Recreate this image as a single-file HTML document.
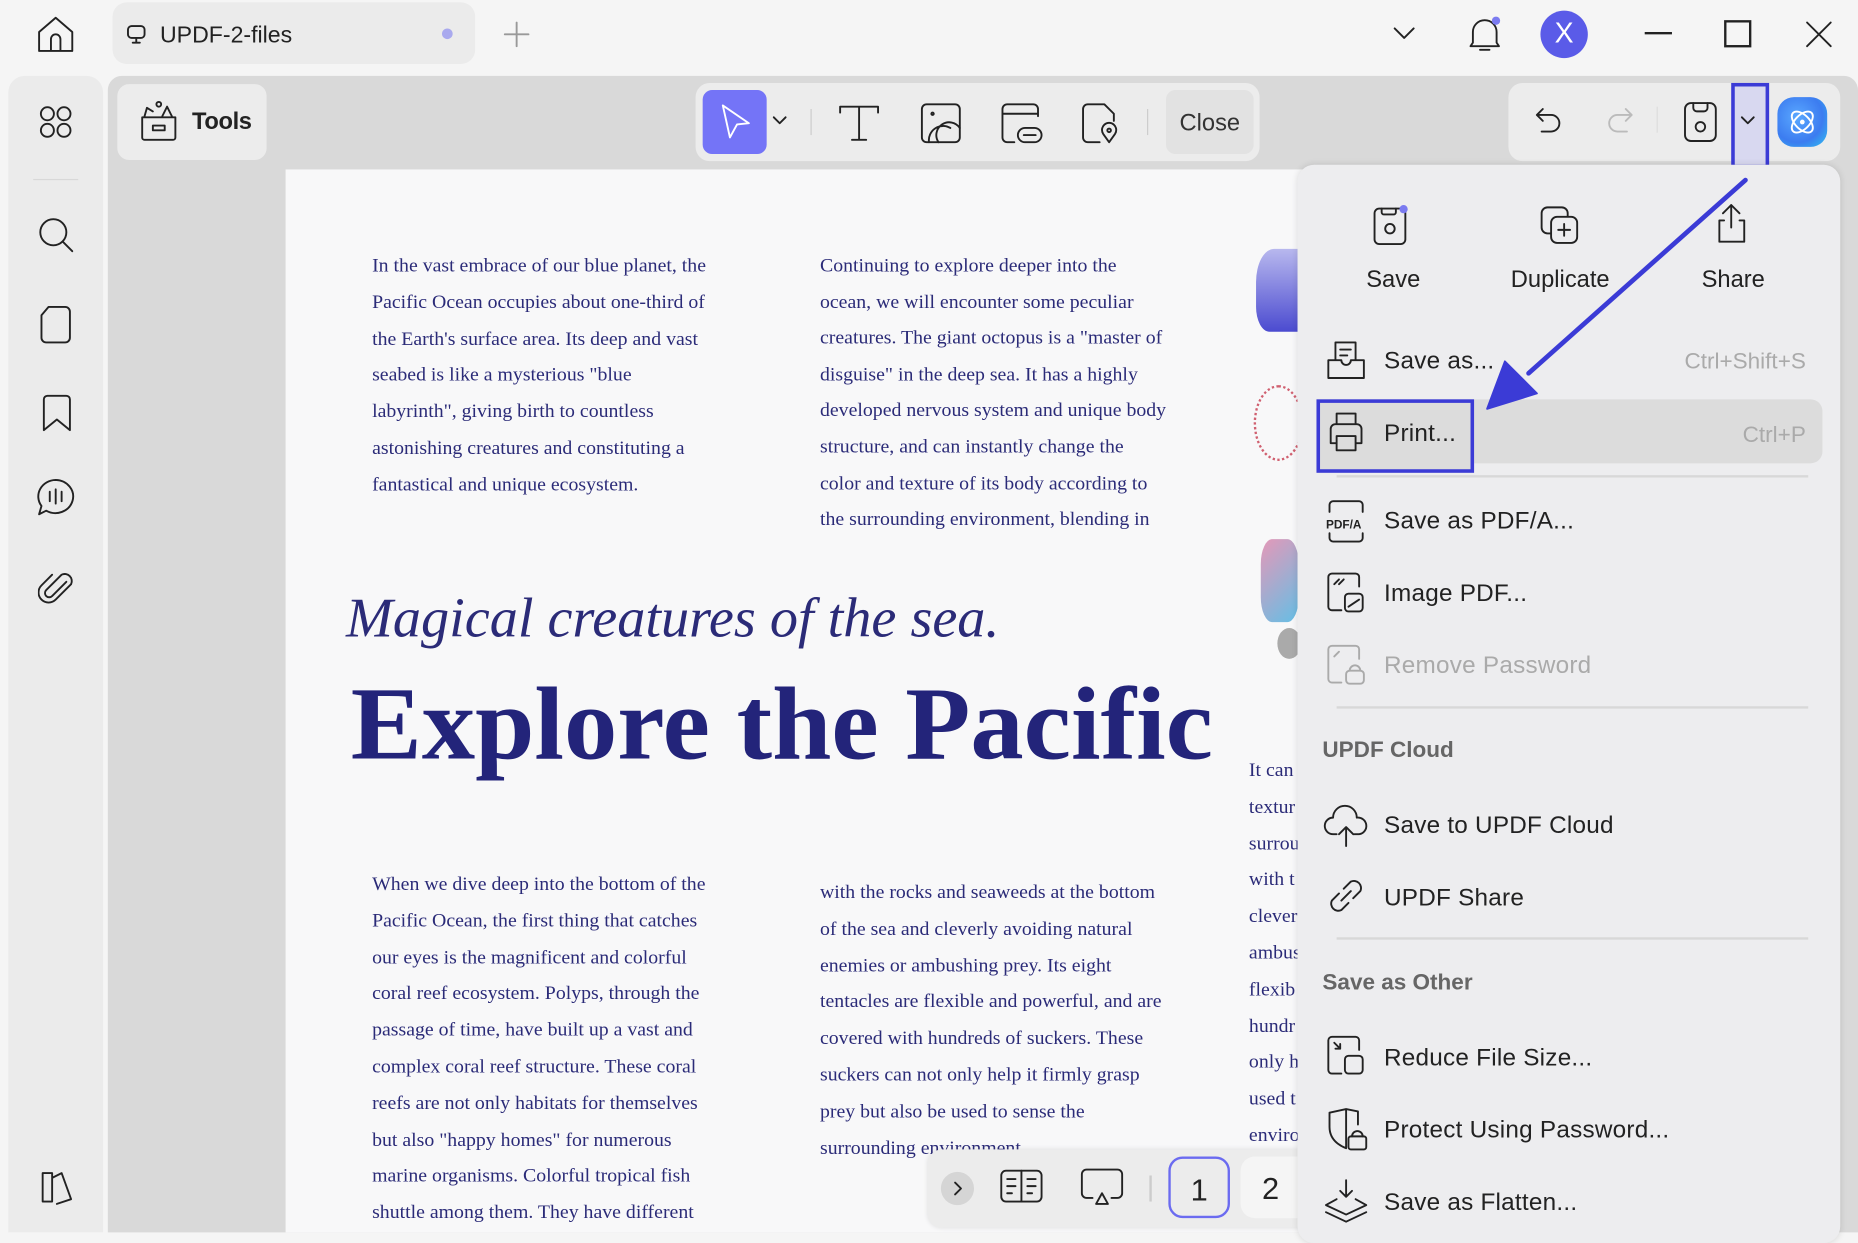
<!DOCTYPE html>
<html><head><meta charset="utf-8">
<style>
html,body{margin:0;padding:0;width:1858px;height:1232px;overflow:hidden;background:#f5f5f5}
#w{position:absolute;left:0;top:0;width:1568px;height:1040px;transform:scale(1.18495);transform-origin:0 0;font-family:"Liberation Sans",sans-serif;background:#f5f5f5}
.a{position:absolute}
svg{position:absolute;fill:none;stroke:#222;stroke-width:1.6;stroke-linecap:round;stroke-linejoin:round}
.pt{position:absolute;font-family:"Liberation Serif",serif;color:#2b2b78;font-size:16px;line-height:30.8px;white-space:nowrap;transform:scaleX(1.045);transform-origin:0 0}
.mi{position:absolute;left:1168px;font-size:20.5px;color:#222;letter-spacing:0.2px}
.sc{position:absolute;right:44px;font-size:19px;color:#aaa}
.hd{position:absolute;left:1116px;font-size:19px;font-weight:bold;color:#666}
.sep{position:absolute;left:1128px;width:398px;height:2px;background:#d8d8d8}
</style></head><body><div id="w">
<!-- top bar -->
<svg style="left:30px;top:12px" width="34" height="34" viewBox="0 0 34 34"><path d="M3 15 L17 3 L31 15 V31 H3 Z M13 31 V21 a4 4 0 0 1 8 0 V31"/></svg>
<div class="a" style="left:95px;top:2px;width:306px;height:52px;border-radius:12px;background:#ebebeb"></div>
<svg style="left:106px;top:20px" width="18" height="18" viewBox="0 0 18 18"><rect x="2" y="2" width="14" height="10" rx="3"/><path d="M9 12 V16 M6 16 H12"/></svg>
<div class="a" style="left:135px;top:19px;font-size:19.5px;color:#222">UPDF-2-files</div>
<div class="a" style="left:373px;top:24px;width:9px;height:9px;border-radius:50%;background:#a9a9ee"></div>
<svg style="left:424px;top:17px" width="24" height="24" viewBox="0 0 24 24"><path d="M12 2V22M2 12H22" stroke="#999"/></svg>
<svg style="left:1174px;top:20px" width="22" height="16" viewBox="0 0 22 16"><path d="M3 4 L11 12 L19 4"/></svg>
<svg style="left:1238px;top:12px" width="30" height="34" viewBox="0 0 30 34"><path d="M5 24 V15 a10 10 0 0 1 20 0 V24 L27 27 H3 Z M11 30 H19"/></svg>
<div class="a" style="left:1259px;top:14px;width:7px;height:7px;border-radius:50%;background:#7b7bf0"></div>
<div class="a" style="left:1300px;top:9px;width:40px;height:40px;border-radius:50%;background:#5a5be8;color:#fff;font-size:24px;text-align:center;line-height:40px">X</div>
<div class="a" style="left:1388px;top:27px;width:23px;height:2px;background:#222"></div>
<div class="a" style="left:1455px;top:17px;width:19px;height:19px;border:2px solid #222"></div>
<svg style="left:1522px;top:16px" width="26" height="26" viewBox="0 0 26 26"><path d="M3 3 L23 23 M23 3 L3 23"/></svg>
<!-- left sidebar -->
<div class="a" style="left:7px;top:64px;width:80px;height:976px;background:#ebebeb;border-radius:14px 14px 0 0"></div>
<svg style="left:32px;top:88px" width="30" height="30" viewBox="0 0 30 30"><circle cx="8" cy="8" r="5.5"/><circle cx="22" cy="8" r="5.5"/><circle cx="8" cy="22" r="5.5"/><circle cx="22" cy="22" r="5.5"/></svg>
<div class="a" style="left:28px;top:151px;width:38px;height:1px;background:#d8d8d8"></div>
<svg style="left:30px;top:181px" width="34" height="34" viewBox="0 0 34 34"><circle cx="15" cy="15" r="11"/><path d="M23 23 L31 31"/></svg>
<svg style="left:32px;top:257px" width="30" height="34" viewBox="0 0 30 34"><path d="M9 2 H23 a4 4 0 0 1 4 4 V28 a4 4 0 0 1 -4 4 H7 a4 4 0 0 1 -4 -4 V9 Z"/></svg>
<svg style="left:34px;top:332px" width="28" height="34" viewBox="0 0 28 34"><path d="M3 5 a3 3 0 0 1 3 -3 H22 a3 3 0 0 1 3 3 V31 L14 22 L3 31 Z"/></svg>
<svg style="left:29px;top:402px" width="36" height="36" viewBox="0 0 36 36"><path d="M18 3 a15 14 0 1 1 -8 26 L4 32 L6 25 a15 14 0 0 1 12 -22 Z M13 13 V21 M18 11 V23 M23 13 V21"/></svg>
<svg style="left:32px;top:479px" width="32" height="34" viewBox="0 0 32 34"><path d="M24 12 L12 24 a3 3 0 0 1 -5 -5 L20 6 a6 6 0 0 1 8 8 L15 27 a8 8 0 0 1 -12 -12 L12 6"/></svg>
<svg style="left:32px;top:986px" width="32" height="32" viewBox="0 0 32 32"><path d="M4 4 H12 V28 H4 Z M12 8 L20 4 L28 26 L16 30"/></svg>
<!-- main -->
<div class="a" style="left:91px;top:64px;width:1477px;height:976px;background:#d9d9d9;border-radius:12px 12px 0 0"></div>
<div class="a" style="left:99px;top:71px;width:126px;height:64px;background:#ececec;border-radius:10px"></div>
<svg style="left:117px;top:84px" width="34" height="36" viewBox="0 0 34 36"><path d="M3 15 H31 V32 a2 2 0 0 1 -2 2 H5 a2 2 0 0 1 -2 -2 Z M12 22 H22 V26 H12 Z M5 14 L7 7 L12 10 M20 14 L24 6 L28 14"/><circle cx="17" cy="4" r="2"/></svg>
<div class="a" style="left:162px;top:92px;font-size:20px;font-weight:bold;color:#222;letter-spacing:-0.3px">Tools</div>
<div class="a" style="left:587px;top:70px;width:476px;height:66px;background:#ececec;border-radius:12px"></div>
<div class="a" style="left:593px;top:76px;width:54px;height:54px;background:#7474f7;border-radius:8px"></div>
<svg style="left:605px;top:86px" width="32" height="34" viewBox="0 0 32 34"><path d="M5 3 L27 18 L17 19 L11 30 Z" stroke="#fff"/></svg>
<svg style="left:651px;top:97px" width="14" height="10" viewBox="0 0 14 10"><path d="M2 2 L7 7 L12 2"/></svg>
<div class="a" style="left:684px;top:92px;width:1px;height:22px;background:#ccc"></div>
<svg style="left:706px;top:86px" width="38" height="34" viewBox="0 0 38 34"><path d="M3 9 V4 H35 V9 M19 4 V32 M13 32 H25"/></svg>
<svg style="left:776px;top:86px" width="36" height="36" viewBox="0 0 36 36"><rect x="2" y="2" width="32" height="32" rx="4"/><circle cx="11" cy="10" r="1"/><path d="M8 34 a12 12 0 0 1 18 -12 M16 34 a10 10 0 0 1 18 -12"/></svg>
<svg style="left:844px;top:86px" width="38" height="36" viewBox="0 0 38 36"><path d="M12 34 H6 a4 4 0 0 1 -4 -4 V6 a4 4 0 0 1 4 -4 H28 a4 4 0 0 1 4 4 V12 M2 10 H32"/><rect x="15" y="22" width="20" height="12" rx="6"/><path d="M20 28 H30"/></svg>
<svg style="left:912px;top:86px" width="34" height="36" viewBox="0 0 34 36"><path d="M16 34 H6 a4 4 0 0 1 -4 -4 V6 a4 4 0 0 1 4 -4 H20 L28 10 V16 M24 34 L19 27 a6 6 0 1 1 10 0 Z"/><circle cx="24" cy="24" r="1.5"/></svg>
<div class="a" style="left:968px;top:92px;width:1px;height:22px;background:#ccc"></div>
<div class="a" style="left:984px;top:76px;width:74px;height:54px;background:#e2e2e2;border-radius:8px;font-size:20px;color:#333;text-align:center;line-height:56px">Close</div>
<div class="a" style="left:1273px;top:70px;width:280px;height:66px;background:#ececec;border-radius:12px"></div>
<svg style="left:1294px;top:88px" width="26" height="28" viewBox="0 0 26 28"><path d="M8 4 L3 9 L8 14 M3 9 H15 a7 7 0 0 1 0 14 H7"/></svg>
<svg style="left:1354px;top:88px" width="26" height="28" viewBox="0 0 26 28"><path d="M18 4 L23 9 L18 14 M23 9 H11 a7 7 0 0 0 0 14 H19" stroke="#bbb"/></svg>
<div class="a" style="left:1398px;top:90px;width:1px;height:22px;background:#ddd"></div>
<svg style="left:1420px;top:85px" width="32" height="36" viewBox="0 0 32 36"><rect x="2" y="2" width="26" height="32" rx="5"/><path d="M9 2 V6 a3 3 0 0 0 3 3 H18 a3 3 0 0 0 3 -3 V2"/><circle cx="15" cy="22" r="4"/></svg>
<div class="a" style="left:1461px;top:70px;width:26px;height:66px;background:#d8d8f0;border:3px solid #3b3bd6"></div>
<svg style="left:1467px;top:97px" width="16" height="10" viewBox="0 0 16 10"><path d="M3 2 L8 7 L13 2"/></svg>
<div class="a" style="left:1500px;top:82px;width:42px;height:42px;border-radius:14px;background:radial-gradient(circle at 40% 40%,#5aa8ff,#3c7cf0 60%,#2fc0f0)"></div>
<svg style="left:1506px;top:88px" width="30" height="30" viewBox="0 0 30 30"><ellipse cx="15" cy="15" rx="11" ry="6" stroke="#fff" transform="rotate(45 15 15)"/><ellipse cx="15" cy="15" rx="11" ry="6" stroke="#fff" transform="rotate(-45 15 15)"/><circle cx="15" cy="15" r="2" fill="#fff" stroke="none"/></svg>
<!-- page -->
<div class="a" style="left:241px;top:143px;width:860px;height:897px;background:#f8f8f9"></div>
<div class="pt" style="left:314px;top:210px">In the vast embrace of our blue planet, the<br>Pacific Ocean occupies about one-third of<br>the Earth's surface area. Its deep and vast<br>seabed is like a mysterious "blue<br>labyrinth", giving birth to countless<br>astonishing creatures and constituting a<br>fantastical and unique ecosystem.</div>
<div class="pt" style="left:692px;top:210px;line-height:30.6px">Continuing to explore deeper into the<br>ocean, we will encounter some peculiar<br>creatures. The giant octopus is a "master of<br>disguise" in the deep sea. It has a highly<br>developed nervous system and unique body<br>structure, and can instantly change the<br>color and texture of its body according to<br>the surrounding environment, blending in</div>
<div class="pt" style="left:292px;top:494px;font-size:47px;line-height:56px;font-style:italic;transform:scaleX(1.01);transform-origin:0 0">Magical creatures of the sea.</div>
<div class="pt" style="left:296px;top:562px;font-size:88px;line-height:100px;font-weight:bold;color:#23247a;transform:scaleX(1.022);transform-origin:0 0">Explore the Pacific</div>
<div class="pt" style="left:314px;top:732px">When we dive deep into the bottom of the<br>Pacific Ocean, the first thing that catches<br>our eyes is the magnificent and colorful<br>coral reef ecosystem. Polyps, through the<br>passage of time, have built up a vast and<br>complex coral reef structure. These coral<br>reefs are not only habitats for themselves<br>but also "happy homes" for numerous<br>marine organisms. Colorful tropical fish<br>shuttle among them. They have different</div>
<div class="pt" style="left:692px;top:739px">with the rocks and seaweeds at the bottom<br>of the sea and cleverly avoiding natural<br>enemies or ambushing prey. Its eight<br>tentacles are flexible and powerful, and are<br>covered with hundreds of suckers. These<br>suckers can not only help it firmly grasp<br>prey but also be used to sense the<br>surrounding environment.</div>
<div class="pt" style="left:1054px;top:636px">It can<br>textur<br>surrou<br>with t<br>clever<br>ambus<br>flexib<br>hundr<br>only h<br>used t<br>enviro</div>
<div class="a" style="left:1060px;top:210px;width:38px;height:70px;background:linear-gradient(#b8b8ee,#4b4bd0);border-radius:40% 0 0 30%"></div>
<div class="a" style="left:1058px;top:325px;width:38px;height:60px;border-radius:50%;border:2px dotted #d06070"></div>
<div class="a" style="left:1064px;top:455px;width:32px;height:70px;background:linear-gradient(135deg,#e080a8,#40b0e0);border-radius:30%;opacity:.8"></div>
<div class="a" style="left:1078px;top:530px;width:20px;height:26px;background:#aaa;border-radius:50%"></div>
<!-- bottom bar -->
<div class="a" style="left:783px;top:970px;width:330px;height:66px;background:#ececec;border-radius:12px;box-shadow:0 0 4px rgba(0,0,0,.1)"></div>
<div class="a" style="left:794px;top:989px;width:28px;height:28px;border-radius:50%;background:#d5d5d5"></div>
<svg style="left:800px;top:995px" width="16" height="16" viewBox="0 0 16 16"><path d="M6 3 L11 8 L6 13"/></svg>
<svg style="left:843px;top:985px" width="38" height="32" viewBox="0 0 38 32"><rect x="2" y="3" width="34" height="26" rx="4"/><path d="M19 3 V29 M7 10 H14 M7 16 H14 M7 22 H11 M24 10 H31 M24 16 H31 M24 22 H28"/></svg>
<svg style="left:910px;top:985px" width="40" height="36" viewBox="0 0 40 36"><path d="M12 26 H7 a4 4 0 0 1 -4 -4 V6 a4 4 0 0 1 4 -4 H33 a4 4 0 0 1 4 4 V22 a4 4 0 0 1 -4 4 H28 M20 22 L25 31 H15 Z"/></svg>
<div class="a" style="left:970px;top:992px;width:2px;height:22px;background:#ccc"></div>
<div class="a" style="left:986px;top:976px;width:52px;height:52px;border:2px solid #6b6bf0;border-radius:12px;font-size:26px;color:#222;text-align:center;line-height:52px;box-sizing:border-box">1</div>
<div class="a" style="left:1047px;top:976px;width:60px;height:52px;background:#f5f5f5;border-radius:12px;font-size:26px;color:#222;line-height:54px;text-indent:18px">2</div>
<!-- dropdown -->
<div class="a" style="left:1095px;top:139px;width:458px;height:910px;background:#ededef;border-radius:14px;box-shadow:0 0 6px rgba(0,0,0,.12)"></div>
<svg style="left:1156px;top:172px" width="36" height="36" viewBox="0 0 36 36"><rect x="4" y="4" width="26" height="30" rx="4"/><path d="M10 4 V7 a2 2 0 0 0 2 2 H20 a2 2 0 0 0 2 -2 V4"/><circle cx="17" cy="21" r="4"/></svg>
<div class="a" style="left:1181px;top:173px;width:7px;height:7px;border-radius:50%;background:#7b7bf0"></div>
<div class="a" style="left:1153px;top:225px;font-size:20px;color:#222">Save</div>
<svg style="left:1298px;top:172px" width="38" height="36" viewBox="0 0 38 36"><rect x="3" y="3" width="22" height="22" rx="5"/><rect x="11" y="11" width="22" height="22" rx="5" fill="#ededef"/><path d="M22 17 V27 M17 22 H27"/></svg>
<div class="a" style="left:1275px;top:225px;font-size:20px;color:#222">Duplicate</div>
<svg style="left:1444px;top:170px" width="34" height="38" viewBox="0 0 34 38"><path d="M17 22 V3 M10 10 L17 3 L24 10 M11 16 H7 V34 H28 V16 H24"/></svg>
<div class="a" style="left:1436px;top:225px;font-size:20px;color:#222">Share</div>
<svg style="left:1118px;top:286px" width="36" height="36" viewBox="0 0 36 36"><path d="M9 18 V3 H26 V18 M13 9 H22 M13 14 H19 M3 18 H14 a4 4 0 0 0 8 0 H33 V33 H3 Z"/></svg>
<div class="mi" style="top:293px">Save as...</div><div class="sc" style="top:295px">Ctrl+Shift+S</div>
<div class="a" style="left:1112px;top:337px;width:426px;height:54px;background:#dcdcdc;border-radius:10px"></div>
<div class="a" style="left:1111px;top:337px;width:133px;height:62px;border:3px solid #3b3bd6;background:#dcdcdc;box-sizing:border-box"></div>
<svg style="left:1118px;top:346px" width="36" height="36" viewBox="0 0 36 36"><path d="M10 12 V3 H26 V12 M10 28 H5 V16 a4 4 0 0 1 4 -4 H27 a4 4 0 0 1 4 4 V28 H26 M10 22 H26 V34 H10 Z"/></svg>
<div class="mi" style="top:354px">Print...</div><div class="sc" style="top:357px">Ctrl+P</div>
<div class="sep" style="top:401px"></div>
<svg style="left:1118px;top:420px" width="36" height="40" viewBox="0 0 36 40"><path d="M4 12 V6 a3 3 0 0 1 3 -3 H29 a3 3 0 0 1 3 3 V12 M4 30 V34 a3 3 0 0 0 3 3 H29 a3 3 0 0 0 3 -3 V30"/><text x="1" y="26" font-size="10" font-weight="bold" fill="#222" stroke="none" font-family="Liberation Sans">PDF/A</text></svg>
<div class="mi" style="top:428px">Save as PDF/A...</div>
<svg style="left:1118px;top:481px" width="36" height="38" viewBox="0 0 36 38"><path d="M14 34 H6 a3 3 0 0 1 -3 -3 V6 a3 3 0 0 1 3 -3 H26 a3 3 0 0 1 3 3 V14 M8 12 L12 8 M12 12 L16 8"/><rect x="17" y="20" width="15" height="15" rx="3"/><path d="M20 31 L29 25"/></svg>
<div class="mi" style="top:489px">Image PDF...</div>
<svg style="left:1118px;top:542px" width="38" height="38" viewBox="0 0 38 38"><path d="M14 34 H6 a3 3 0 0 1 -3 -3 V6 a3 3 0 0 1 3 -3 H26 a3 3 0 0 1 3 3 V14 M8 12 L12 8" stroke="#aaa"/><rect x="18" y="24" width="15" height="11" rx="3" stroke="#aaa"/><path d="M21 24 a4 4 0 0 1 9 0" stroke="#aaa"/></svg>
<div class="mi" style="top:550px;color:#aaa">Remove Password</div>
<div class="sep" style="top:596px"></div>
<div class="hd" style="top:623px">UPDF Cloud</div>
<svg style="left:1116px;top:676px" width="40" height="40" viewBox="0 0 40 40"><path d="M12 28 H9 a7 7 0 0 1 0 -14 a10 10 0 0 1 20 0 a7 7 0 0 1 2 14 H27 M20 38 V22 M14 28 L20 22 L26 28"/></svg>
<div class="mi" style="top:685px">Save to UPDF Cloud</div>
<svg style="left:1118px;top:738px" width="36" height="36" viewBox="0 0 36 36"><path d="M16 12 L22 6 a6 6 0 0 1 8 8 L24 20 M20 24 L14 30 a6 6 0 0 1 -8 -8 L12 16 M14 22 L22 14"/></svg>
<div class="mi" style="top:746px">UPDF Share</div>
<div class="sep" style="top:791px"></div>
<div class="hd" style="top:819px">Save as Other</div>
<svg style="left:1118px;top:872px" width="38" height="38" viewBox="0 0 38 38"><path d="M14 34 H6 a3 3 0 0 1 -3 -3 V6 a3 3 0 0 1 3 -3 H26 a3 3 0 0 1 3 3 V14 M8 8 L13 13 M9 13 H13 V9"/><rect x="17" y="19" width="15" height="15" rx="3"/></svg>
<div class="mi" style="top:881px">Reduce File Size...</div>
<svg style="left:1118px;top:933px" width="40" height="40" viewBox="0 0 40 40"><path d="M18 36 C8 32 4 26 4 18 V6 L18 3 L28 5 V16 M18 3 V36"/><rect x="20" y="26" width="15" height="11" rx="2"/><path d="M23 26 a4 4 0 0 1 9 0"/></svg>
<div class="mi" style="top:942px">Protect Using Password...</div>
<svg style="left:1116px;top:994px" width="40" height="40" viewBox="0 0 40 40"><path d="M20 2 V16 M15 11 L20 16 L25 11 M12 18 L3 23 L20 31 L37 23 L28 18 M3 29 L20 37 L37 29"/></svg>
<div class="mi" style="top:1003px">Save as Flatten...</div>
<!-- arrow -->
<svg style="left:1240px;top:140px" width="240" height="220" viewBox="0 0 240 220"><path d="M233 12 L50 175" stroke="#3b3bd6" stroke-width="4"/><path d="M15 205 L30 165 L57 192 Z" fill="#3b3bd6" stroke="#3b3bd6"/></svg>
</div></body></html>
